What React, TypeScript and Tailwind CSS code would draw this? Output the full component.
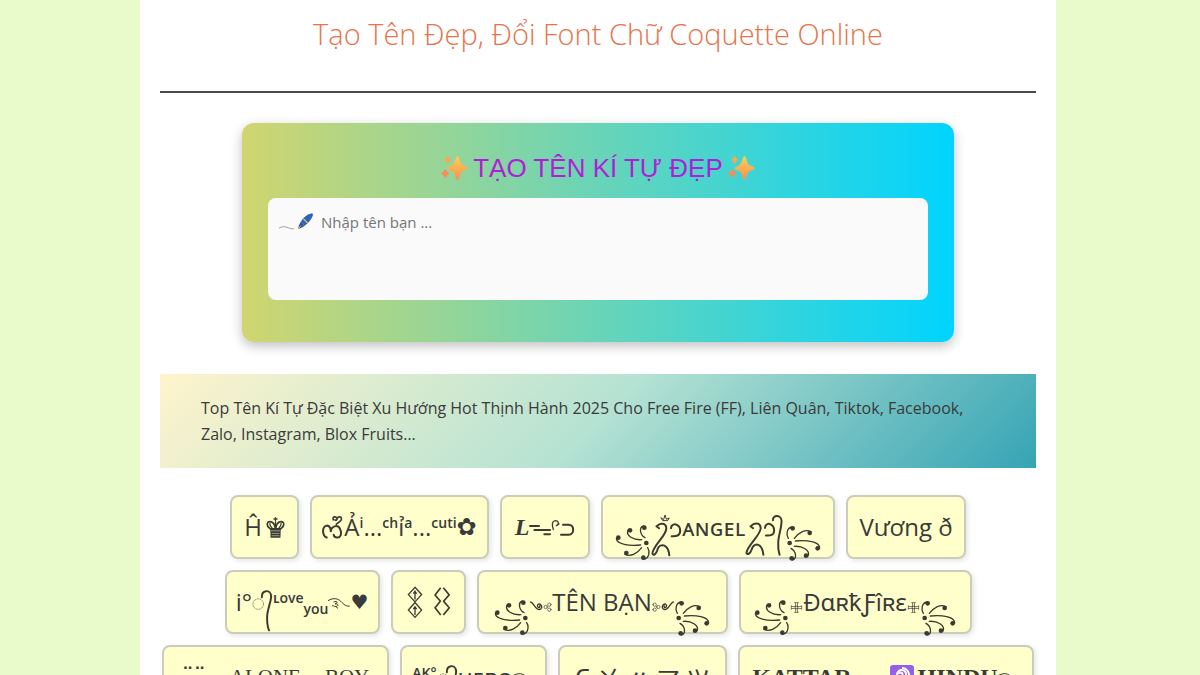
import { useState, type ReactNode } from "react";
import clsx from "clsx";

const ink = "#3a3a32";

function Sparkles() {
    return (
        <svg viewBox="628 134 82 82" className="w-[27px] h-[27px] shrink-0" aria-hidden="true">
            <defs>
                <linearGradient id="spark" x1="0" y1="0" x2="0" y2="1">
                    <stop offset="0" stopColor="#ffcf4f" />
                    <stop offset="1" stopColor="#f98f56" />
                </linearGradient>
            </defs>
            <path fill="url(#spark)" d="M678 137 C683 138 686 158 692 164 C699 168 709 169 709 174 C709 179 699 180 692 184 C686 189 683 209 678 210 C673 209 670 189 664 184 C657 180 648 179 648 174 C648 169 657 168 664 164 C670 158 673 138 678 137Z" />
            <path fill="#fba64e" d="M649 137 C652 138 652 144 655 145 C659 147 659 150 655 152 C652 154 652 159 649 160 C646 159 645 154 642 152 C638 150 638 147 642 145 C645 144 646 138 649 137Z" />
            <path fill="#f98a5c" d="M641 177 C644 178 645 184 648 186 C654 189 654 191 648 194 C645 196 644 203 641 204 C638 203 637 196 633 194 C627 191 627 189 633 186 C637 184 638 178 641 177Z" />
        </svg>
    );
}

function PenIcon() {
    return (
        <svg viewBox="144 308 108 54" className="w-9 h-[18px]" aria-hidden="true">
            <path d="M147 356 C158 350 166 352 174 355 C180 358 186 359 192 358" fill="none" stroke="#777" strokeWidth="2" />
            <path d="M213 336 C220 325 233 314 246 312 C251 314 249 320 245 326 C240 336 232 344 223 350Z" fill="#2a63b8" />
            <path d="M213 336 L223 350 L214 355 L204 359 L207 348Z" fill="#285696" />
            <path d="M220 328 L233 341" stroke="#e3b95c" strokeWidth="4" />
            <path d="M204 359 L213 349" stroke="#e3b95c" strokeWidth="3" />
        </svg>
    );
}

function Swirl({ flip = false }: { flip?: boolean }) {
    return (
        <svg
            viewBox="2 341 114 114"
            className={clsx("w-[38px] h-[38px] shrink-0 translate-y-4", flip && "rotate-180")}
            fill="none"
            stroke={ink}
            strokeWidth="4"
            strokeLinecap="round"
            aria-hidden="true"
        >
            <path d="M85 404 C50 407 13 403 12 384 M88 388 C65 390 39 376 47 359 M98 382 C82 373 80 351 93 347 M88 412 C76 428 56 441 38 432 M106 412 C114 424 110 444 95 446" />
            <g fill={ink} stroke="none">
                <circle cx="102" cy="398" r="7" />
                <circle cx="18" cy="382" r="7" />
                <circle cx="53" cy="360" r="7" />
                <circle cx="96" cy="352" r="7" />
                <circle cx="42" cy="428" r="7" />
                <circle cx="93" cy="442" r="7" />
            </g>
        </svg>
    );
}

function CrownedHook() {
    return (
        <svg viewBox="493 85 93 130" className="w-[31px] h-[43px] shrink-0 translate-y-2" fill="none" stroke={ink} strokeWidth="6" strokeLinecap="round" aria-hidden="true">
            <path d="M509 122 L517 128 M511 121 C520 111 538 111 539 128 C540 150 496 184 497 205 C500 212 508 206 511 196 C516 177 530 176 538 184 C545 190 547 200 548 210" />
            <path d="M553 128 C554 115 565 115 571 118 C584 124 584 145 573 150 C567 153 560 152 555 152" />
            <path d="M523 97 L528 105 H543 L548 97 L539 101 L535 88 L531 101Z" strokeWidth="3" />
        </svg>
    );
}

function TailHook() {
    return (
        <svg viewBox="39 87 120 130" className="w-10 h-[43px] shrink-0 translate-y-2" fill="none" stroke={ink} strokeWidth="6" strokeLinecap="round" aria-hidden="true">
            <path d="M55 124 L63 130 M57 123 C66 113 85 112 86 130 C87 150 43 184 43 205 C46 212 55 206 58 196 C63 178 75 176 84 184 C91 190 93 200 94 210" />
            <path d="M99 129 C100 116 111 115 117 119 C130 125 129 146 119 150 C113 153 107 152 102 152" />
            <path d="M123 106 C122 88 149 89 149 108 C149 130 140 150 139 172 C138 190 140 201 143 210" />
        </svg>
    );
}

function CurlSquiggle() {
    return (
        <svg viewBox="314 84 66 74" className="w-[22px] h-[25px] shrink-0" fill="none" stroke={ink} strokeWidth="6" strokeLinecap="round" aria-hidden="true">
            <path d="M328 151 C314 145 314 120 326 116 C339 112 341 129 340 135 C341 116 361 111 368 125 C375 140 369 153 358 151 C352 150 349 147 349 143" />
            <path d="M348 98 C344 88 355 86 359 94 C360 98 356 101 353 98 M359 94 C366 84 376 91 371 99 C367 104 362 107 357 111" strokeWidth="5" />
        </svg>
    );
}

function KingIcon() {
    return (
        <svg viewBox="132 92 56 64" className="w-[19px] h-[21px] shrink-0" fill="none" stroke={ink} strokeWidth="5" aria-hidden="true">
            <path d="M160 93 V106 M154 98 H166" strokeWidth="4" />
            <path d="M144 128 C132 121 132 106 143 106 C153 106 158 115 160 128 C162 115 167 106 177 106 C188 106 188 121 176 128Z" />
            <path d="M150 126 C143 119 142 114 144 111 M170 126 C177 119 178 114 176 111 M160 106 V128" strokeWidth="4" />
            <path d="M144 127 H176 L175 155 H145Z" fill={ink} stroke="none" />
            <path d="M146 134 H174 M148 142 H172 M148 149 H172" stroke="#ffffcc" strokeWidth="1.5" />
        </svg>
    );
}

function DashTail() {
    return (
        <svg viewBox="117 98 138 60" className="w-[46px] h-5 shrink-0" fill="none" stroke={ink} strokeWidth="6" strokeLinecap="round" aria-hidden="true">
            <path d="M120 125 H147 M133 137 H180 M163 150 H180" />
            <path d="M190 136 C185 119 186 110 196 109 C205 109 208 117 202 122 M199 124 L207 119" strokeWidth="4" />
            <path d="M219 121 H236 C254 121 254 151 236 151 H213" strokeWidth="6" />
        </svg>
    );
}

function DottedHook() {
    return (
        <svg viewBox="103 308 64 132" className="w-[21px] h-11 shrink-0 translate-y-2" fill="none" stroke={ink} strokeLinecap="round" aria-hidden="true">
            <circle cx="122" cy="356" r="16" strokeWidth="2" strokeDasharray="1 4" />
            <path d="M133 335 C132 312 158 311 161 329 C164 345 149 369 149 397 C149 415 151 428 155 436" strokeWidth="6" />
        </svg>
    );
}

function Wave() {
    return (
        <svg viewBox="322 336 66 44" className="w-[22px] h-[15px] shrink-0" fill="none" stroke={ink} strokeWidth="3" strokeLinecap="round" aria-hidden="true">
            <path d="M323 352 C339 342 354 346 364 358 C372 367 379 370 386 369" />
            <path d="M340 356 C351 352 353 359 343 362 C354 361 355 369 345 370 C339 370 338 366 335 368 M345 370 L351 375" />
        </svg>
    );
}

function Diamonds({ open = false }: { open?: boolean }) {
    return (
        <svg viewBox="558 308 48 100" className="w-4 h-[33px] shrink-0" fill="none" stroke={ink} strokeWidth="4" aria-hidden="true">
            {open ? (
                <path d="M578 313 L561 335 L578 355 M586 313 L604 335 L586 355 M578 353 L561 374 L578 396 M586 353 L604 374 L586 396" strokeWidth="5" />
            ) : (
                <path d="M582 312 L562 334 L582 356 L602 334Z M582 358 L562 381 L582 403 L602 381Z M582 322 V349 M577 331 L582 324 L587 331 M582 369 V396 M577 378 L582 371 L587 378" />
            )}
        </svg>
    );
}

function Vine({ flip = false }: { flip?: boolean }) {
    return (
        <svg viewBox="122 350 66 42" className={clsx("w-[22px] h-[14px] shrink-0 translate-y-[5px]", flip && "-scale-x-100")} fill="none" stroke={ink} strokeWidth="4" strokeLinecap="round" aria-hidden="true">
            <path d="M124 356 C131 357 134 370 143 376 C154 384 161 371 154 364 C147 359 142 366 146 371 C150 375 153 370 151 368" />
            <circle cx="169" cy="371" r="5" strokeWidth="2" />
            <circle cx="180" cy="364" r="5" strokeWidth="2" />
            <circle cx="180" cy="379" r="5" strokeWidth="2" />
        </svg>
    );
}

function CrossOrnament() {
    return (
        <svg viewBox="192 350 40 40" className="w-[13px] h-[13px] shrink-0 translate-y-[5px]" fill="none" stroke={ink} strokeWidth="3" aria-hidden="true">
            <path d="M209 355 V367 H196 M215 355 V367 H228 M209 385 V373 H196 M215 385 V373 H228 M205 355 H219 M205 385 H219 M196 363 V377 M228 363 V377" strokeWidth="2" />
            <circle cx="212" cy="370" r="4" />
        </svg>
    );
}

function OmTile() {
    return (
        <svg viewBox="0 0 24 24" className="w-6 h-6 shrink-0" aria-hidden="true">
            <rect width="24" height="24" rx="3" fill="#9461e8" />
            <path d="M7 10 C7 3 17 4 16 10 C16 13 12 13 12 16 M9 9 C10 6 14 8 12 11 M5 14 C5 22 19 22 19 14 C20 6 16 3 12 3" fill="none" stroke="#fff" strokeWidth="2" />
        </svg>
    );
}

function Small({ children, low = false }: { children: ReactNode; low?: boolean }) {
    return (
        <span className={clsx("text-sm leading-none font-semibold", low ? "translate-y-[7px]" : "-translate-y-1")}>
            {children}
        </span>
    );
}

const names: { label: string; width: string; body: ReactNode }[] = [
    { label: "Ĥ♚", width: "min-w-[69px]", body: <>Ĥ<span className="w-1" /><KingIcon /></> },
    {
        label: "Ảⁱ...ᶜʰỉᵃ...ᶜᵘᵗⁱ✿",
        width: "min-w-[179px]",
        body: <><CurlSquiggle />Ả<Small>i</Small>...<Small>ch</Small>ỉ<Small>a</Small>...<Small>cuti</Small><span className="font-['DejaVu_Sans']">✿</span></>,
    },
    { label: "𝑳", width: "min-w-[90px]", body: <><b className="font-['Liberation_Serif'] italic">L</b><DashTail /></> },
    { label: "ANGEL", width: "min-w-[234px]", body: <><Swirl /><CrownedHook /><span>ᴀɴɢᴇʟ</span><TailHook /><Swirl flip /></> },
    { label: "Vương ð", width: "min-w-[120px]", body: "Vương ð" },
    {
        label: "i love you",
        width: "min-w-[155px]",
        body: <>i°<DottedHook /><Small>ʟove</Small><Small low>you</Small><Wave /><span className="font-['DejaVu_Sans'] text-xl">♥</span></>,
    },
    { label: "Diamonds", width: "min-w-[75px]", body: <><Diamonds /><span className="w-[11px]" /><Diamonds open /></> },
    { label: "TÊN BẠN", width: "min-w-[251px]", body: <><Swirl /><Vine /><span>TÊN BẠN</span><Vine flip /><Swirl flip /></> },
    { label: "DarkFire", width: "min-w-[233px]", body: <><Swirl /><CrossOrnament /><span>ĐɑʀꝁƑîʀɛ</span><CrossOrnament /><Swirl flip /></> },
    {
        label: "ALONE BOY",
        width: "min-w-[227px]",
        body: <span className="flex items-center gap-6 font-['Liberation_Serif'] text-[21px]"><span className="font-['DejaVu_Sans'] text-2xl">¨¨</span><span>ALONE</span><span>BOY</span></span>,
    },
    { label: "AK HERO", width: "min-w-[147px]", body: <><Small>AK°</Small><DottedHook /><span>ʜᴇʀᴏ</span><Wave /></> },
    { label: "Ϛㄨ〃マツ", width: "min-w-[169px]", body: <span className="flex gap-[6px] font-['Noto_Sans_CJK_JP','DejaVu_Sans',sans-serif]"><span>Ϛ</span><span>ㄨ</span><span>〃</span><span>マ</span><span>ツ</span></span> },
    {
        label: "KATTAR HINDU",
        width: "min-w-[296px]",
        body: <><b className="font-['Liberation_Serif']">KATTAR</b><Vine /><span className="w-4" /><OmTile /><b className="font-['Liberation_Serif'] pl-1">HINDU</b><Wave /></>,
    },
];

function App() {
    const [name, setName] = useState("");

    return (
        <div className="min-h-screen bg-[#e9fbcb] lg:pl-35 lg:pr-36 font-['Open_Sans','Noto_Sans','DejaVu_Sans',sans-serif] text-[#3a3a3a]">
            <main className="min-h-screen bg-white px-5 pt-3 pb-10">
                <h1 className="text-center text-[29px] leading-[44px] font-light text-[#e8734a]">
                    Tạo Tên Đẹp, Đổi Font Chữ Coquette Online
                </h1>
                <hr className="mt-[35px] border-t-2 border-[#4a4a4a]" />

                {/* Name input card */}
                <section className="mx-auto mt-[30px] max-w-[712px] rounded-xl bg-linear-to-r/srgb from-[#d1d56f] to-[#00d4ff] px-[26px] pt-[27px] pb-[42px] shadow-[0_4px_12px_rgba(0,0,0,0.25)]">
                    <label htmlFor="name" className="flex items-center justify-center gap-[5px] font-['Liberation_Sans'] text-[26px] leading-9 text-[#b01fd6]">
                        <Sparkles />
                        TẠO TÊN KÍ TỰ ĐẸP
                        <Sparkles />
                    </label>
                    <div className="relative mt-3">
                        <textarea
                            id="name"
                            value={name}
                            onChange={(e) => setName(e.target.value)}
                            placeholder="Nhập tên bạn ..."
                            className="block h-[102px] w-full resize-none rounded-lg bg-[#fafafa] px-[10px] py-3 indent-[43px] text-[15px] leading-6 placeholder:text-[#757575]"
                        />
                        <span className="pointer-events-none absolute left-[10px] top-[14px]">
                            <PenIcon />
                        </span>
                    </div>
                </section>

                <section className="mt-8 bg-linear-135/srgb from-[#fff4cc] via-[#b5e2d3] to-[#35a4b5] px-[41px] py-[21px] text-base leading-[26px]">
                    <p>
                        Top Tên Kí Tự Đặc Biệt Xu Hướng Hot Thịnh Hành 2025 Cho Free Fire (FF), Liên Quân, Tiktok, Facebook, Zalo, Instagram, Blox Fruits…
                    </p>
                </section>

                {/* Name list */}
                <div className="mt-[27px] flex flex-wrap justify-center gap-[11px]">
                    {names.map((item) => (
                        <button
                            key={item.label}
                            type="button"
                            aria-label={item.label}
                            onClick={() => setName(item.label)}
                            className={clsx(
                                "flex h-16 items-center justify-center rounded-lg border-2 border-[#ccccbb] bg-[#ffffcc] text-2xl whitespace-nowrap shadow-[2px_2px_5px_rgba(0,0,0,0.1)]",
                                item.width
                            )}
                        >
                            {item.body}
                        </button>
                    ))}
                </div>
            </main>
        </div>
    );
}

export default App;
